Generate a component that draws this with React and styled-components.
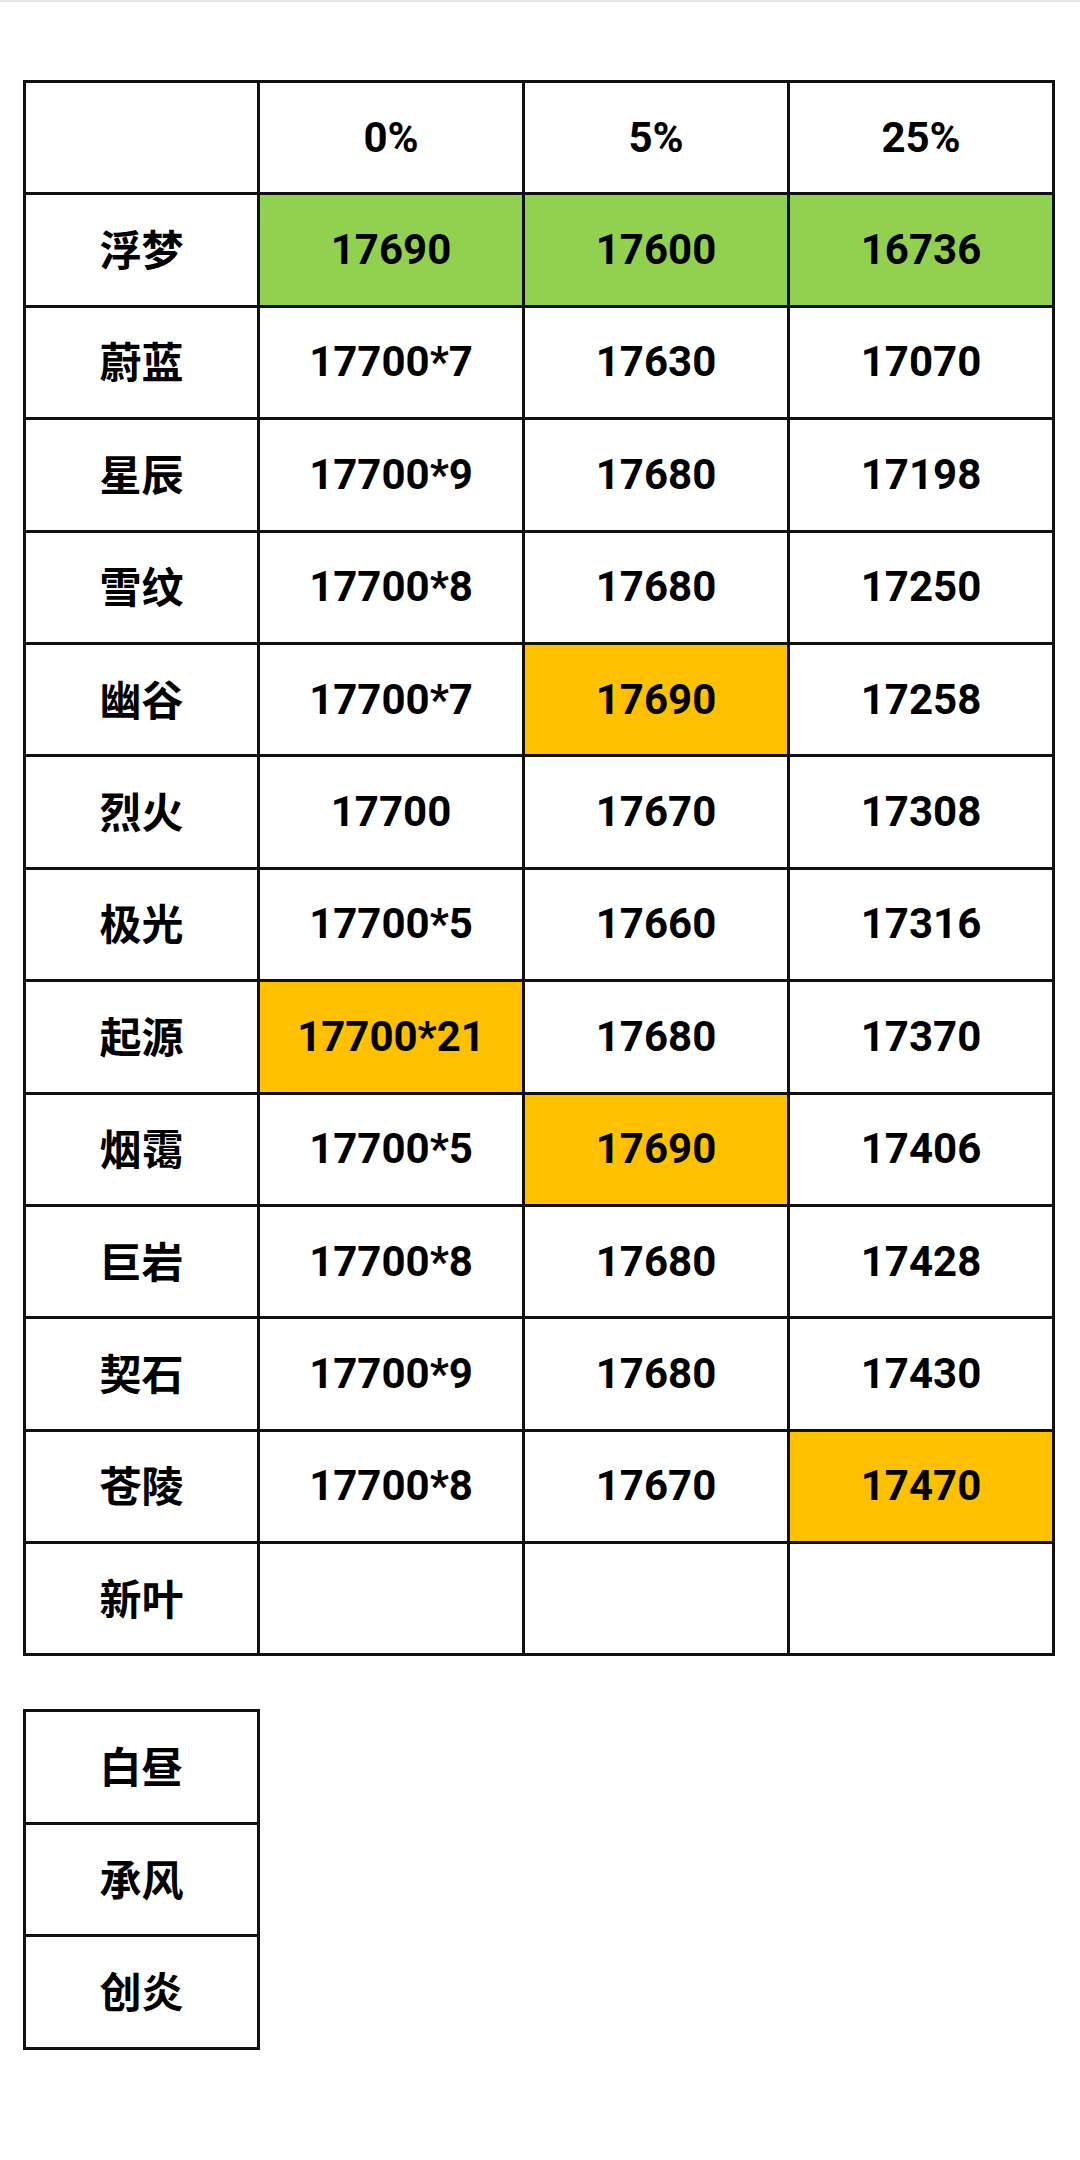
import React from "react";
import styled, { createGlobalStyle } from "styled-components";

const Global = createGlobalStyle`
  html, body { margin: 0; padding: 0; background: #ffffff; }
  body { font-family: Roboto, "Noto Sans CJK SC", sans-serif; color: #000; }
`;

const Page = styled.div`
  width: 1080px;
  min-height: 2160px;
  box-sizing: border-box;
  border-top: 2px solid #e4e4e4;
  padding: 78px 0 0 23px;
  display: flex;
  flex-direction: column;
  align-items: flex-start;
  gap: 53px;
`;

const Table = styled.div`
  display: grid;
  grid-template-columns: ${(p) => p.$cols};
  grid-auto-rows: 112.4px;
  border-top: 3px solid #111;
  border-left: 3px solid #111;
`;

const Cell = styled.div`
  box-sizing: border-box;
  border-right: 3px solid #111;
  border-bottom: 3px solid #111;
  background: ${(p) => p.$bg || "#ffffff"};
  display: flex;
  align-items: center;
  justify-content: center;
  padding-bottom: ${(p) => (p.$name ? "4px" : "0")};
  font-family: ${(p) =>
    p.$name ? `"Noto Sans CJK SC", sans-serif` : `Roboto, "Noto Sans CJK SC", sans-serif`};
  font-weight: 700;
  font-size: 42px;
  line-height: 1;
  color: #000;
`;

const GREEN = "#92d050";
const ORANGE = "#ffc000";

const header = ["", "0%", "5%", "25%"];
const rows = [
  ["浮梦", ["17690", GREEN], ["17600", GREEN], ["16736", GREEN]],
  ["蔚蓝", ["17700*7"], ["17630"], ["17070"]],
  ["星辰", ["17700*9"], ["17680"], ["17198"]],
  ["雪纹", ["17700*8"], ["17680"], ["17250"]],
  ["幽谷", ["17700*7"], ["17690", ORANGE], ["17258"]],
  ["烈火", ["17700"], ["17670"], ["17308"]],
  ["极光", ["17700*5"], ["17660"], ["17316"]],
  ["起源", ["17700*21", ORANGE], ["17680"], ["17370"]],
  ["烟霭", ["17700*5"], ["17690", ORANGE], ["17406"]],
  ["巨岩", ["17700*8"], ["17680"], ["17428"]],
  ["契石", ["17700*9"], ["17680"], ["17430"]],
  ["苍陵", ["17700*8"], ["17670"], ["17470", ORANGE]],
  ["新叶", [""], [""], [""]],
];
const extra = ["白昼", "承风", "创炎"];

export default function App() {
  return (
    <>
      <Global />
      <Page>
        <Table $cols="234px 265px 265px 265px">
          {header.map((h, i) => (
            <Cell key={"h" + i}>{h}</Cell>
          ))}
          {rows.map(([name, ...vals]) => (
            <React.Fragment key={name}>
              <Cell $name>{name}</Cell>
              {vals.map(([v, bg], j) => (
                <Cell key={j} $bg={bg}>
                  {v}
                </Cell>
              ))}
            </React.Fragment>
          ))}
        </Table>
        <Table $cols="234px">
          {extra.map((n) => (
            <Cell key={n} $name>
              {n}
            </Cell>
          ))}
        </Table>
      </Page>
    </>
  );
}
